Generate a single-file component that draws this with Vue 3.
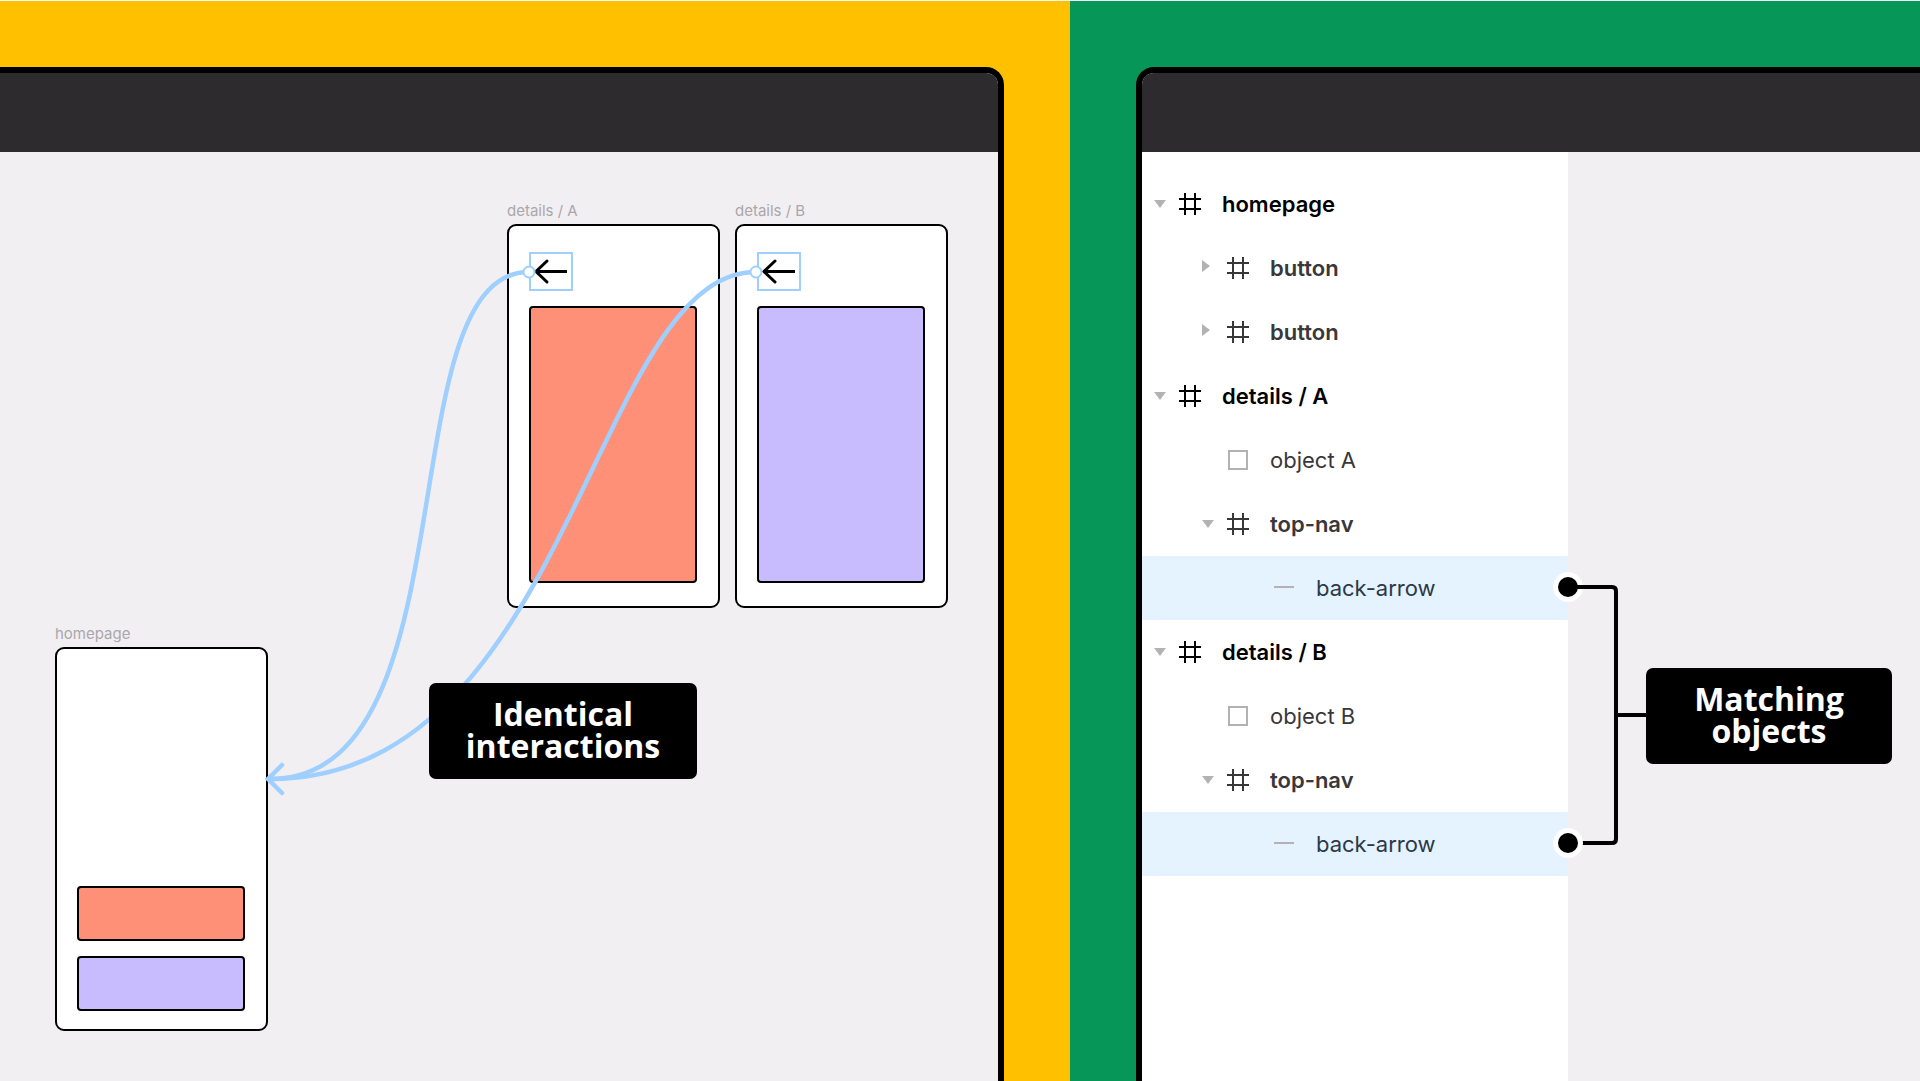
<script setup>
const frames = [
  { name: 'details / A', x: 507, y: 47, items: ['nav', 'coral'] },
  { name: 'details / B', x: 735, y: 47, items: ['nav', 'violet'] },
  { name: 'homepage', x: 55, y: 470, items: ['coral', 'violet'], home: true },
]

const layers = [
  { name: 'homepage', level: 0, icon: 'frame', open: true },
  { name: 'button', level: 1, icon: 'frame', open: false },
  { name: 'button', level: 1, icon: 'frame', open: false },
  { name: 'details / A', level: 0, icon: 'frame', open: true },
  { name: 'object A', level: 1, icon: 'rect' },
  { name: 'top-nav', level: 1, icon: 'frame', open: true },
  { name: 'back-arrow', level: 2, icon: 'line', selected: true },
  { name: 'details / B', level: 0, icon: 'frame', open: true },
  { name: 'object B', level: 1, icon: 'rect' },
  { name: 'top-nav', level: 1, icon: 'frame', open: true },
  { name: 'back-arrow', level: 2, icon: 'line', selected: true },
]
</script>

<template>
  <main class="page">
    <section class="half half-left">
      <div class="window window-left">
        <header class="titlebar"></header>
        <div class="canvas">
          <div
            v-for="frame in frames"
            :key="frame.name"
            class="frame"
            :style="{ left: `${frame.x}px`, top: `${frame.y}px` }"
          >
            <span class="frame-label">{{ frame.name }}</span>
            <div class="frame-body" :class="{ 'is-home': frame.home }">
              <template v-for="item in frame.items" :key="item">
                <div v-if="item === 'nav'" class="arrow-box">
                  <svg width="40" height="35" viewBox="0 0 40 35">
                    <path d="M16 7L5 17.500L16 28" />
                    <path class="shaft" d="M5 17.500H36" />
                  </svg>
                </div>
                <div v-else class="shape" :class="item"></div>
              </template>
            </div>
          </div>

          <svg class="noodles" width="998" height="929" viewBox="0 152 998 929">
            <path d="M529 272C386 272 475 779 270 779" />
            <path d="M756 272C593 272 572 779 270 779" />
            <path d="M282 765L268 779L282 793" />
            <circle cx="529" cy="272" r="5.500" />
            <circle cx="756" cy="272" r="5.500" />
          </svg>

          <p class="callout callout-left">Identical<br />interactions</p>
        </div>
      </div>
    </section>

    <section class="half half-right">
      <div class="window window-right">
        <header class="titlebar"></header>
        <div class="workspace">
          <aside class="sidebar">
            <ul class="layers">
              <li
                v-for="(layer, i) in layers"
                :key="i"
                class="layer"
                :class="[`level-${layer.level}`, `is-${layer.icon}`, { selected: layer.selected }]"
              >
                <svg class="caret" width="12" height="12" viewBox="0 0 12 12">
                  <path v-if="layer.open" d="M0 2H12L6 10Z" />
                  <path v-else-if="layer.open === false" d="M0 -2L8 4L0 10Z" />
                </svg>
                <svg class="layer-icon" width="22" height="22" viewBox="0 0 22 22">
                  <path v-if="layer.icon === 'frame'" d="M6 0V22M16 0V22M0 6H22M0 16H22" />
                  <rect v-else-if="layer.icon === 'rect'" x="2" y="2" width="18" height="18" />
                  <path v-else d="M1 10H21" />
                </svg>
                <span class="layer-name">{{ layer.name }}</span>
              </li>
            </ul>

            <svg class="bracket" width="94" height="290" viewBox="0 0 94 290">
              <circle class="halo" cx="16" cy="17" r="15" />
              <path d="M16 17H60Q64 17 64 21V269Q64 273 60 273H16M64 145H94" />
              <circle class="halo" cx="16" cy="273" r="15" />
              <circle cx="16" cy="17" r="10" />
              <circle cx="16" cy="273" r="10" />
            </svg>
            <p class="callout callout-right">Matching<br />objects</p>
          </aside>
        </div>
      </div>
    </section>
  </main>
</template>

<style>
body {
  margin: 0;
}
</style>

<style scoped>
.page {
  display: grid;
  grid-template-columns: 1070fr 850fr;
  box-sizing: border-box;
  min-height: 100vh;
  border-top: 1px solid #f7f7f7;
  overflow: hidden;
  font-family: Inter, "Liberation Sans", sans-serif;
}

.half {
  display: flex;
  box-sizing: border-box;
  min-width: 0;
  padding-top: 66px;
}

.half-left {
  padding-right: 66px;
  background: #ffc000;
}

.half-right {
  padding-left: 66px;
  background: #069658;
}

.window {
  flex: 1;
  display: flex;
  flex-direction: column;
  min-width: 0;
  border: 0 solid #000;
  border-top-width: 6px;
  background: #f2eff3;
}

.window-left {
  border-right-width: 6px;
  border-top-right-radius: 18px;
}

.window-right {
  border-left-width: 6px;
  border-top-left-radius: 18px;
}

.titlebar {
  height: 79px;
  background: #2e2b2f;
}

.window-left .titlebar {
  border-top-right-radius: 12px;
}

.window-right .titlebar {
  border-top-left-radius: 12px;
}

.canvas {
  flex: 1;
  position: relative;
}

.frame {
  position: absolute;
}

.frame-label {
  display: block;
  height: 25px;
  font-size: 15px;
  line-height: 24px;
  color: #a9a7aa;
}

.frame-body {
  display: flex;
  flex-direction: column;
  box-sizing: border-box;
  width: 213px;
  height: 384px;
  padding: 26px 21px 23px 20px;
  border: 2px solid #000;
  border-radius: 9px;
  background: #fff;
}

.frame-body.is-home {
  justify-content: flex-end;
  gap: 15px;
  padding-bottom: 18px;
}

.arrow-box {
  width: 40px;
  height: 35px;
  margin-bottom: 15px;
  border: 2px solid #9fcfff;
}

.arrow-box svg {
  display: block;
  fill: none;
  stroke: #000;
  stroke-width: 3;
  stroke-linecap: round;
}

.arrow-box .shaft {
  stroke-linecap: butt;
}

.shape {
  flex: 1;
  box-sizing: border-box;
  border: 2px solid #000;
  border-radius: 4px;
}

.is-home .shape {
  flex: none;
  height: 55px;
}

.coral {
  background: #ff9078;
}

.violet {
  background: #c8bcff;
}

.noodles {
  position: absolute;
  left: 0;
  top: 0;
  fill: none;
  stroke: #9fcfff;
  stroke-width: 4.5;
  stroke-linecap: round;
}

.noodles circle {
  fill: #fff;
  stroke-width: 2;
}

.callout {
  position: absolute;
  box-sizing: border-box;
  height: 96px;
  margin: 0;
  padding: 15px 0;
  border-radius: 7px;
  background: #000;
  color: #fff;
  font-family: "Open Sans", "Noto Sans", sans-serif;
  font-size: 32px;
  font-weight: 700;
  line-height: 32px;
  text-align: center;
}

.callout-left {
  left: 429px;
  top: 531px;
  width: 268px;
}

.callout-right {
  left: 504px;
  top: 516px;
  width: 246px;
}

.workspace {
  flex: 1;
  display: flex;
}

.sidebar {
  position: relative;
  box-sizing: border-box;
  width: 426px;
  padding-top: 20px;
  background: #fff;
}

.layers {
  margin: 0;
  padding: 0;
  list-style: none;
}

.layer {
  display: flex;
  align-items: center;
  height: 64px;
  padding-left: 12px;
  color: #39373a;
}

.level-0 {
  color: #000;
}

.level-1 {
  padding-left: 60px;
}

.level-2 {
  padding-left: 106px;
}

.selected {
  background: #e5f2ff;
  color: #2b3947;
}

.caret {
  margin-right: 13px;
  overflow: visible;
  fill: #b3b1b4;
}

.layer-icon {
  margin-right: 21px;
  fill: none;
  stroke: currentColor;
  stroke-width: 2;
}

.is-rect .layer-icon,
.is-line .layer-icon {
  stroke: #b3b1b4;
}

.layer-name {
  font-size: 22px;
  line-height: 28px;
}

.is-frame .layer-name {
  font-weight: 600;
}

.bracket {
  position: absolute;
  left: 410px;
  top: 418px;
  fill: none;
}

.bracket path {
  stroke: #000;
  stroke-width: 4;
}

.bracket circle {
  fill: #000;
}

.bracket .halo {
  fill: #fff;
}
</style>
